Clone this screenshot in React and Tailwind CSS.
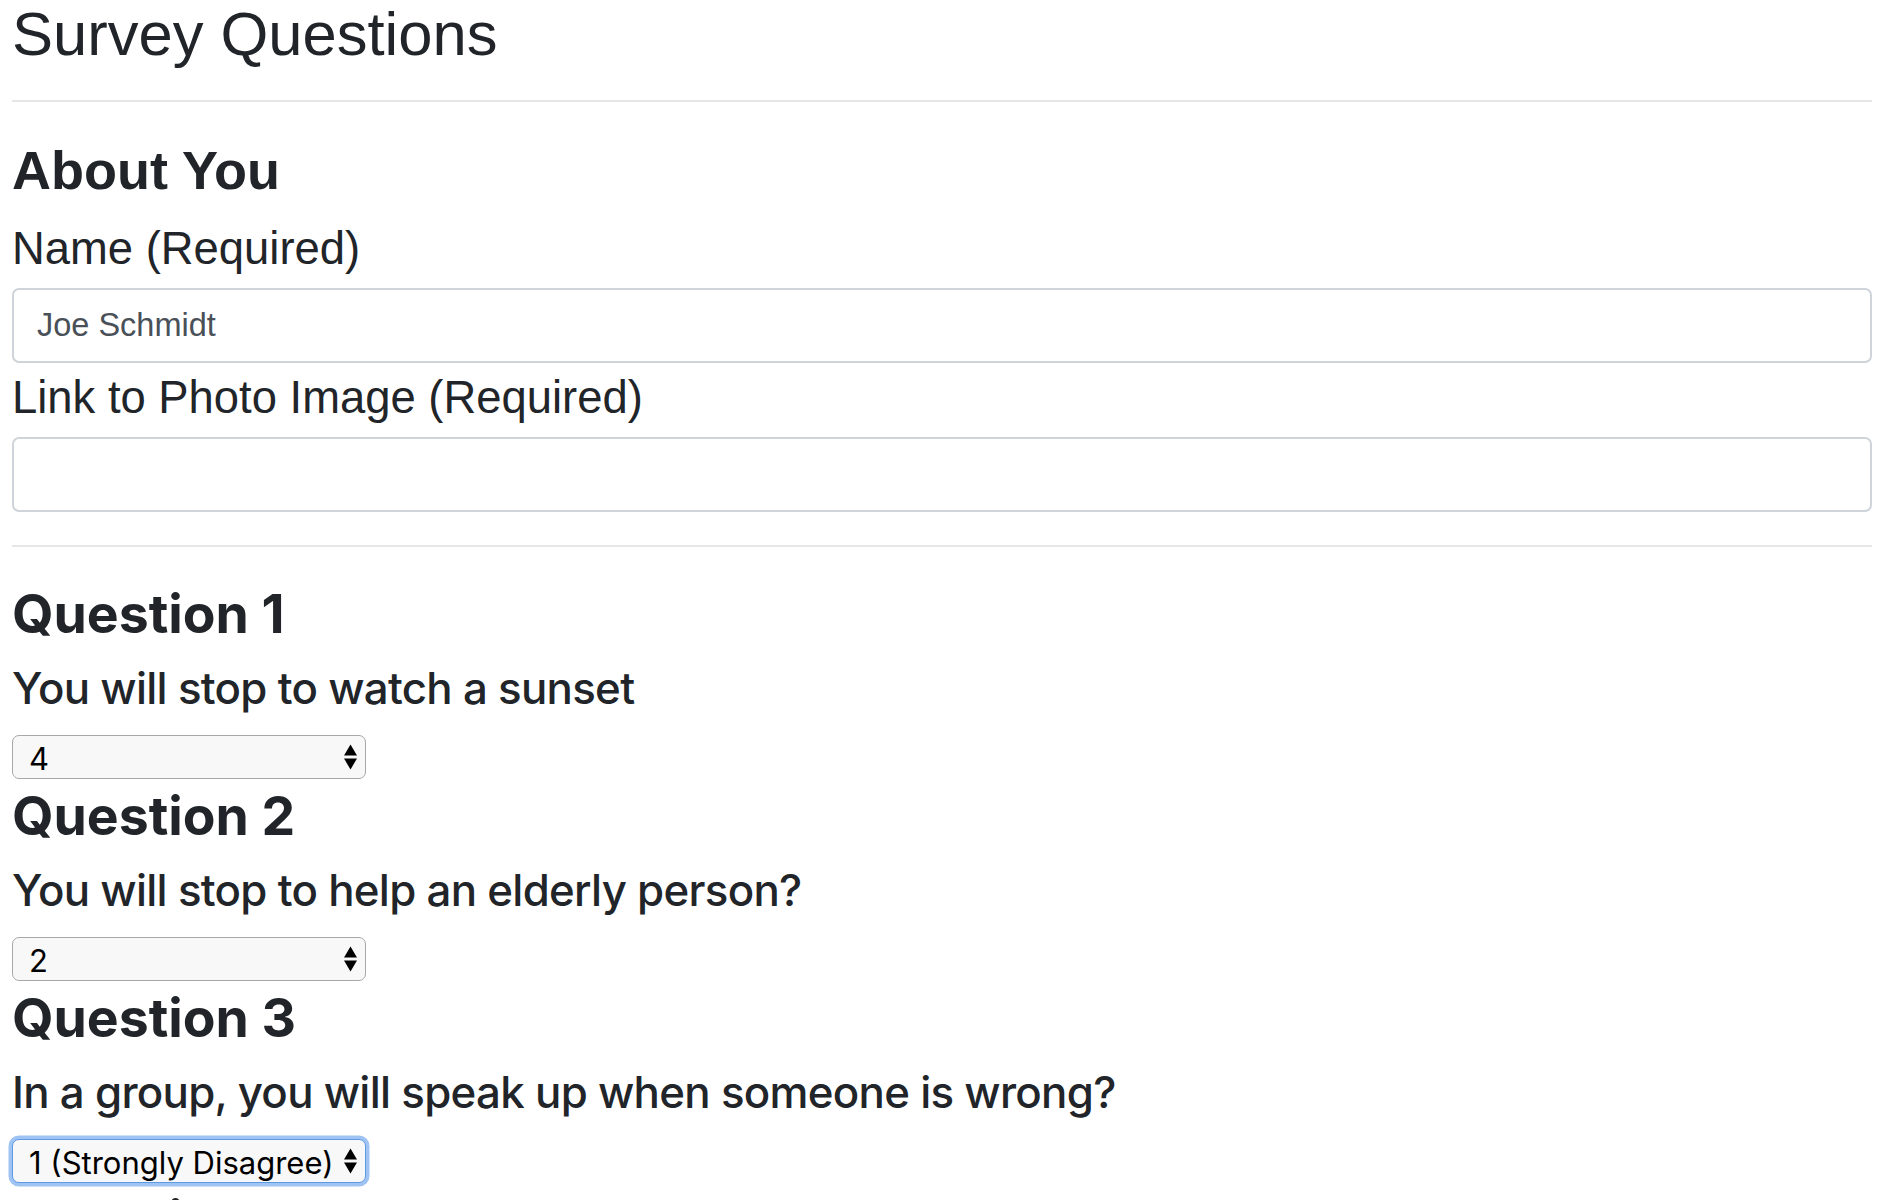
const OPTIONS = ["1 (Strongly Disagree)", "2", "3", "4", "5 (Strongly Agree)"];

const QUESTIONS = [
  { n: 1, text: "You will stop to watch a sunset", value: "4" },
  { n: 2, text: "You will stop to help an elderly person?", value: "2" },
  { n: 3, text: "In a group, you will speak up when someone is wrong?", value: "1 (Strongly Disagree)", focused: true },
  { n: 4, text: "You enjoy trying food you have never eaten before?", value: "1 (Strongly Disagree)" },
  { n: 5, text: "You would rather stay in than go out on a Friday night?", value: "1 (Strongly Disagree)" },
];

function Arrows() {
  return (
    <svg width="15" height="28" viewBox="0 0 15 28" className="pointer-events-none absolute right-[8px] top-1/2 -translate-y-1/2">
      <path d="M7.5 1.5 L14 12.5 L1 12.5 Z" fill="#000" />
      <path d="M1 15.5 L14 15.5 L7.5 26.5 Z" fill="#000" />
    </svg>
  );
}

function Rating({ value, focused }) {
  return (
    <div className="relative w-[354px]">
      <select
        defaultValue={value}
        className={
          focused
            ? "block h-[44px] w-[354px] appearance-none rounded-[7px] border-[1.5px] border-[#5d9ae4] bg-[#f8f8f8] pl-[16px] font-['Inter',sans-serif] text-[31px] text-black shadow-[0_0_0_3.5px_#9fc4f4] outline-none"
            : "block h-[44px] w-[354px] appearance-none rounded-[7px] border-[1.5px] border-[#a8a8a8] bg-[#f8f8f8] pl-[16px] font-['Inter',sans-serif] text-[31px] text-black outline-none"
        }
      >
        {OPTIONS.map((o) => (
          <option key={o} value={o}>
            {o}
          </option>
        ))}
      </select>
      <Arrows />
    </div>
  );
}

export default function App() {
  return (
    <div className="min-h-[1200px] bg-white pl-[12px] pr-[28px] text-[#212529]">
      <h1 className="font-['Liberation_Sans',Arial,sans-serif] text-[61.5px] leading-[67px] font-normal">Survey Questions</h1>
      <hr className="mt-[33px] border-0 border-t-2 border-[#e6e6e6]" />

      {/* About you */}
      <h2 className="mt-[38px] font-['Liberation_Sans',Arial,sans-serif] text-[54px] leading-[60px] font-bold">About You</h2>
      <h3 className="mt-[23px] font-['Liberation_Sans',Arial,sans-serif] text-[45.4px] leading-[52px]">Name (Required)</h3>
      <input
        type="text"
        defaultValue="Joe Schmidt"
        className="mt-[13px] block h-[75px] w-full rounded-[7px] border-2 border-[#ced4da] bg-white pl-[23px] font-['Liberation_Sans',Arial,sans-serif] text-[32.5px] text-[#495057] outline-none"
      />
      <h3 className="mt-[9px] font-['Liberation_Sans',Arial,sans-serif] text-[45.4px] leading-[52px]">Link to Photo Image (Required)</h3>
      <input
        type="text"
        className="mt-[13px] block h-[75px] w-full rounded-[7px] border-2 border-[#ced4da] bg-white pl-[23px] font-['Liberation_Sans',Arial,sans-serif] text-[32.5px] text-[#495057] outline-none"
      />
      <hr className="mt-[33px] border-0 border-t-2 border-[#e6e6e6]" />

      {/* Questions */}
      <div className="mt-[37px] font-['Inter',sans-serif]">
        {QUESTIONS.map((q, i) => (
          <div key={q.n} className={i === 0 ? "" : "mt-[7px]"}>
            <h2 className="text-[53.5px] leading-[60px] font-bold">Question {q.n}</h2>
            <h3 className="mt-[19px] text-[43.8px] leading-[52px] font-medium tracking-[-0.016em]">{q.text}</h3>
            <div className="mt-[20px]">
              <Rating value={q.value} focused={q.focused} />
            </div>
          </div>
        ))}
      </div>
    </div>
  );
}
